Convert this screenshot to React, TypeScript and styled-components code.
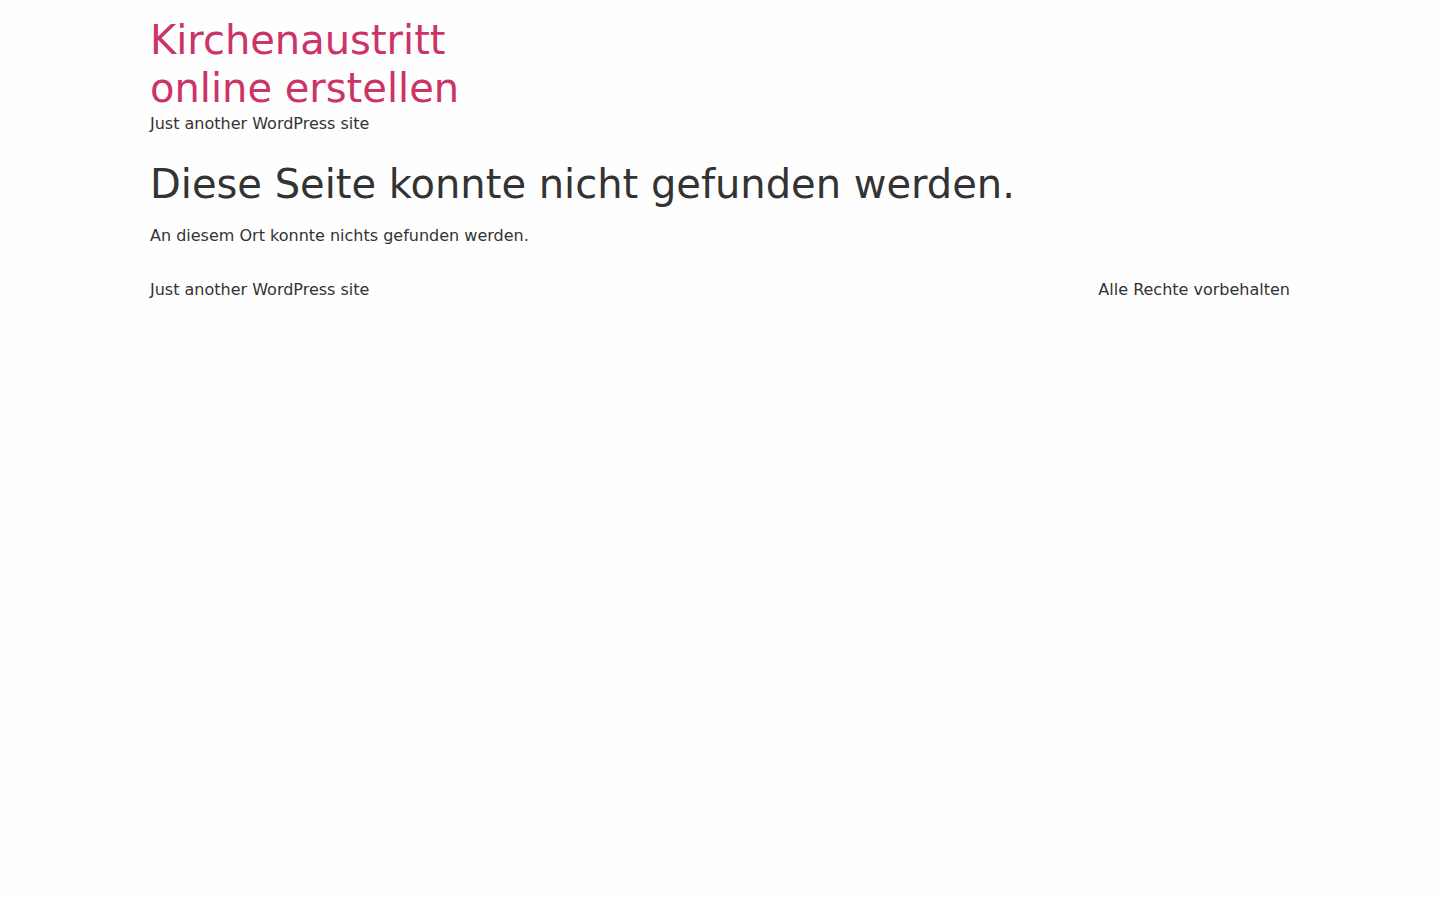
import React from "react";
import styled, { createGlobalStyle } from "styled-components";

const GlobalStyle = createGlobalStyle`
  *, *::before, *::after { box-sizing: border-box; }
  body {
    margin: 0;
    background: #fefefe;
    color: #333;
    font-family: "DejaVu Sans", sans-serif;
    font-size: 16px;
    line-height: 24px;
  }
`;

const container = `
  width: 100%;
  max-width: 1140px;
  margin: 0 auto;
`;

const Header = styled.header`
  ${container}
  display: flex;
  padding: 16px 0;
`;

const Branding = styled.div`
  width: 30%;
`;

const Title = styled.h1`
  margin: 0;
  font-size: 40px;
  font-weight: 500;
  line-height: 48px;
`;

const HomeLink = styled.a`
  color: #c36;
  text-decoration: none;

  &:hover {
    color: #336;
  }
`;

const Paragraph = styled.p`
  margin: 0;
`;

const Main = styled.main`
  ${container}
  display: flex;
  flex-direction: column;
  gap: 16px;
  padding: 8px 0 14px;
`;

const Footer = styled.footer`
  ${container}
  display: flex;
  justify-content: space-between;
  padding: 16px 0;
`;

const tagline = "Just another WordPress site";

export default function App() {
  return (
    <>
      <GlobalStyle />
      <Header>
        <Branding>
          <Title>
            <HomeLink href="/">Kirchenaustritt online erstellen</HomeLink>
          </Title>
          <Paragraph>{tagline}</Paragraph>
        </Branding>
      </Header>
      <Main>
        <Title>Diese Seite konnte nicht gefunden werden.</Title>
        <Paragraph>An diesem Ort konnte nichts gefunden werden.</Paragraph>
      </Main>
      <Footer>
        <Paragraph>{tagline}</Paragraph>
        <Paragraph>Alle Rechte vorbehalten</Paragraph>
      </Footer>
    </>
  );
}
